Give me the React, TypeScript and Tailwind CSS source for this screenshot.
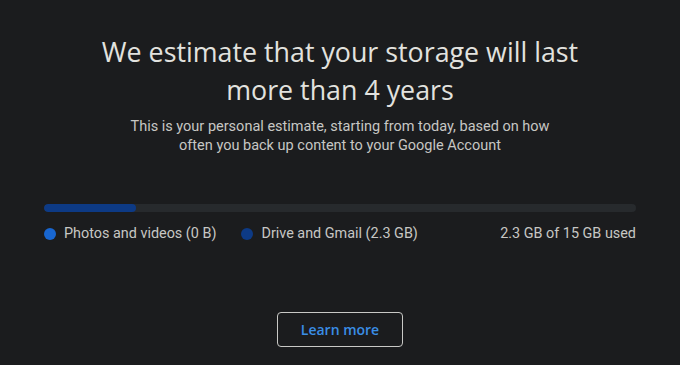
export default function App() {
  return (
    <div className="h-[365px] w-[680px] bg-[#1b1c1e] px-[44px] pt-[33px] font-['Roboto',sans-serif]">
      {/* Estimate header */}
      <div className="text-center">
        <h1 className="mx-auto max-w-[520px] font-['Open_Sans',sans-serif] text-[26.8px] leading-[38px] text-[#e2e2df]">
          We estimate that your storage will last more than 4 years
        </h1>
        <p className="mx-auto mt-[9px] max-w-[440px] text-[14.5px] leading-[18.5px] text-[#c7c7c4]">
          This is your personal estimate, starting from today, based on how often you back up content to your Google Account
        </p>
      </div>

      {/* Usage bar */}
      <div className="mt-[49px] h-[8px] w-full overflow-hidden rounded-full bg-[#272a2d]">
        <div className="h-full w-[92px] rounded-full bg-[#0d3a85]" />
      </div>
      <div className="mt-[11px] flex items-center text-[14.4px] text-[#c7c7c4]">
        <span className="mr-[8px] h-[12px] w-[12px] rounded-full bg-[#1866d0]" />
        <span>Photos and videos (0 B)</span>
        <span className="ml-[25px] mr-[8px] h-[12px] w-[12px] rounded-full bg-[#0d3a85]" />
        <span>Drive and Gmail (2.3 GB)</span>
        <span className="ml-auto">2.3 GB of 15 GB used</span>
      </div>

      {/* Action */}
      <div className="mt-[67px] flex justify-center">
        <button className="h-[35px] w-[126px] rounded-[4px] border border-[#c9c9c6] font-['Open_Sans',sans-serif] text-[14px] font-semibold text-[#3a8ee6]">
          Learn more
        </button>
      </div>
    </div>
  )
}
